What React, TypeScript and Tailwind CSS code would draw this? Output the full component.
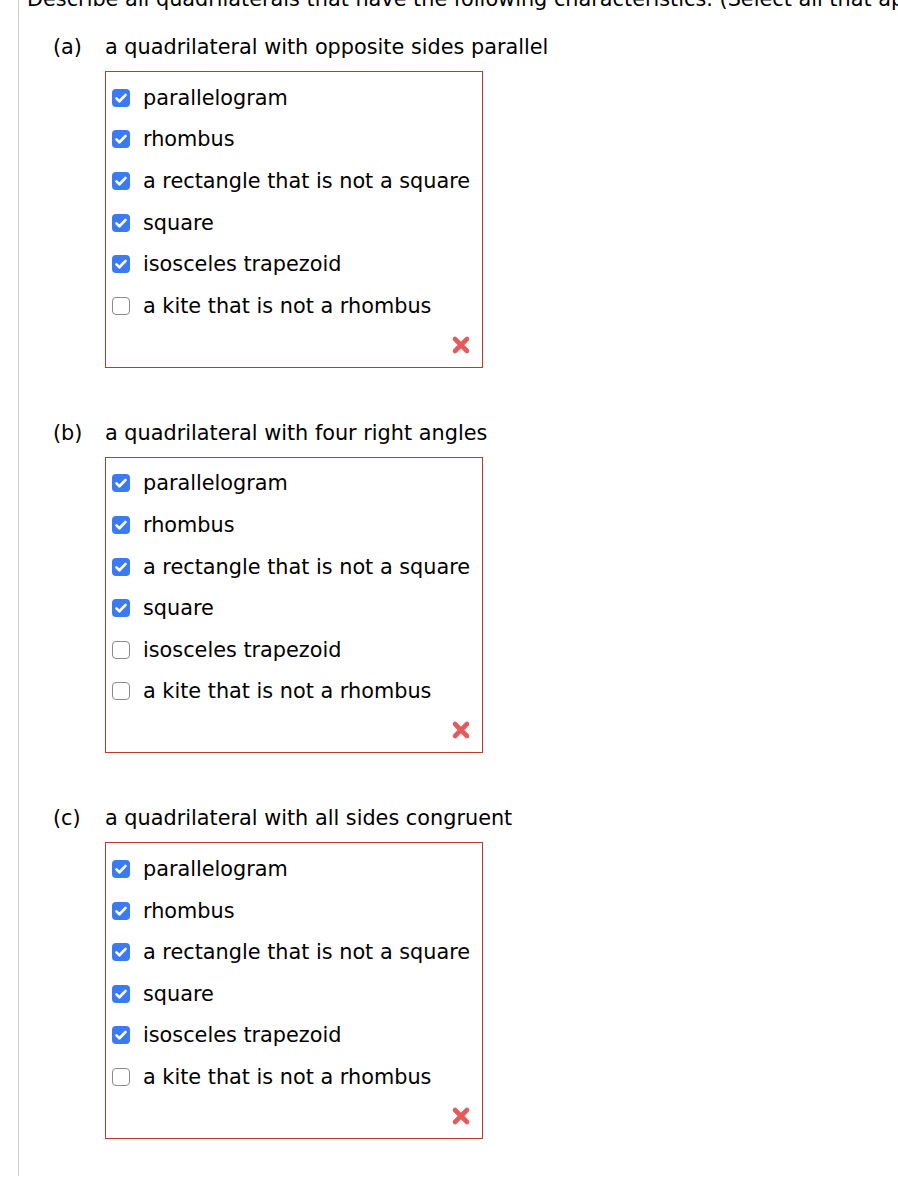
import React from "react";

type Part = { letter: string; prompt: string; checked: boolean[] };

const options = [
  "parallelogram",
  "rhombus",
  "a rectangle that is not a square",
  "square",
  "isosceles trapezoid",
  "a kite that is not a rhombus",
];

const parts: Part[] = [
  { letter: "(a)", prompt: "a quadrilateral with opposite sides parallel", checked: [true, true, true, true, true, false] },
  { letter: "(b)", prompt: "a quadrilateral with four right angles", checked: [true, true, true, true, false, false] },
  { letter: "(c)", prompt: "a quadrilateral with all sides congruent", checked: [true, true, true, true, true, false] },
];

function Checkbox({ checked }: { checked: boolean }) {
  if (checked) {
    return (
      <span className="flex h-[18px] w-[18px] shrink-0 items-center justify-center rounded-[4px] bg-[#3a7af3]">
        <svg width="14" height="14" viewBox="0 0 16 16" fill="none">
          <path d="M2.8 8.4l3.4 3.3L13.2 4.4" stroke="white" strokeWidth="3" strokeLinecap="round" strokeLinejoin="round" />
        </svg>
      </span>
    );
  }
  return <span className="h-[18px] w-[18px] shrink-0 rounded-[4px] border-[1.5px] border-[#8a8a8a] bg-white" />;
}

function WrongMark() {
  return (
    <svg width="20" height="20" viewBox="0 0 20 20">
      <path d="M4 4L16 16M16 4L4 16" stroke="#e55b5b" strokeWidth="4.6" strokeLinecap="round" />
    </svg>
  );
}

function Question({ part }: { part: Part }) {
  return (
    <div className="flex flex-col">
      <div className="flex leading-6">
        <span className="w-[52px]">{part.letter}</span>
        <span>{part.prompt}</span>
      </div>
      <div className="ml-[52px] mt-3 flex w-[378px] flex-col border border-[#c0392b] pl-[6px] pt-[5px] pr-[11px] pb-[12px]">
        {part.checked.map((c, i) => (
          <div key={i} className="flex h-[41.6px] items-center gap-[13px]">
            <Checkbox checked={c} />
            <span className="leading-6">{options[i]}</span>
          </div>
        ))}
        <div className="flex h-[28px] items-end justify-end">
          <WrongMark />
        </div>
      </div>
    </div>
  );
}

export default function App() {
  return (
    <div className="h-[1178px] overflow-hidden bg-white text-[20.8px] text-black" style={{ fontFamily: '"DejaVu Sans", Verdana, sans-serif' }}>
      <div className="ml-[18px] flex h-[1176px] flex-col border-l border-[#cfcfcf] pl-[34px]">
        <div className="-ml-[26px] -mt-[13px] whitespace-nowrap leading-6">
          Describe all quadrilaterals that have the following characteristics. (Select all that apply.)
        </div>
        <div className="mt-6 flex flex-col gap-[53px]">
          {parts.map((p) => (
            <Question key={p.letter} part={p} />
          ))}
        </div>
      </div>
    </div>
  );
}
